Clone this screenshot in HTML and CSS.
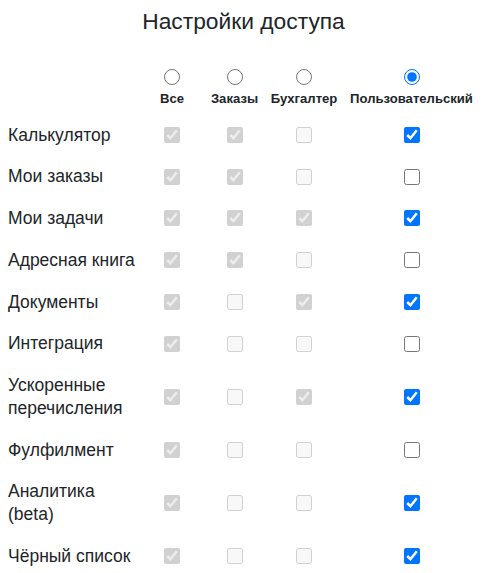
FILE: index.html
```html
<!DOCTYPE html>
<html lang="ru">
<head>
<meta charset="utf-8">
<title>Настройки доступа</title>
<link rel="stylesheet" href="styles.css">
</head>
<body>
<div class="page">
  <h1 class="title">Настройки доступа</h1>
  <table class="access">
    <colgroup>
      <col class="c-label">
      <col class="c-all">
      <col class="c-orders">
      <col class="c-acc">
      <col class="c-custom">
    </colgroup>
    <thead>
      <tr>
        <th></th>
        <th><label class="preset"><input type="radio" name="preset"><span>Все</span></label></th>
        <th><label class="preset"><input type="radio" name="preset"><span>Заказы</span></label></th>
        <th><label class="preset"><input type="radio" name="preset"><span>Бухгалтер</span></label></th>
        <th><label class="preset"><input type="radio" name="preset" checked><span>Пользовательский</span></label></th>
      </tr>
    </thead>
    <tbody>
      <tr><td class="name">Калькулятор</td><td><input type="checkbox" disabled checked></td><td><input type="checkbox" disabled checked></td><td><input type="checkbox" disabled></td><td><input type="checkbox" checked></td></tr>
      <tr><td class="name">Мои заказы</td><td><input type="checkbox" disabled checked></td><td><input type="checkbox" disabled checked></td><td><input type="checkbox" disabled></td><td><input type="checkbox"></td></tr>
      <tr><td class="name">Мои задачи</td><td><input type="checkbox" disabled checked></td><td><input type="checkbox" disabled checked></td><td><input type="checkbox" disabled checked></td><td><input type="checkbox" checked></td></tr>
      <tr><td class="name">Адресная книга</td><td><input type="checkbox" disabled checked></td><td><input type="checkbox" disabled checked></td><td><input type="checkbox" disabled></td><td><input type="checkbox"></td></tr>
      <tr><td class="name">Документы</td><td><input type="checkbox" disabled checked></td><td><input type="checkbox" disabled></td><td><input type="checkbox" disabled checked></td><td><input type="checkbox" checked></td></tr>
      <tr><td class="name">Интеграция</td><td><input type="checkbox" disabled checked></td><td><input type="checkbox" disabled></td><td><input type="checkbox" disabled></td><td><input type="checkbox"></td></tr>
      <tr><td class="name">Ускоренные перечисления</td><td><input type="checkbox" disabled checked></td><td><input type="checkbox" disabled></td><td><input type="checkbox" disabled checked></td><td><input type="checkbox" checked></td></tr>
      <tr><td class="name">Фулфилмент</td><td><input type="checkbox" disabled checked></td><td><input type="checkbox" disabled></td><td><input type="checkbox" disabled></td><td><input type="checkbox"></td></tr>
      <tr><td class="name">Аналитика (beta)</td><td><input type="checkbox" disabled checked></td><td><input type="checkbox" disabled></td><td><input type="checkbox" disabled></td><td><input type="checkbox" checked></td></tr>
      <tr><td class="name">Чёрный список</td><td><input type="checkbox" disabled checked></td><td><input type="checkbox" disabled></td><td><input type="checkbox" disabled></td><td><input type="checkbox" checked></td></tr>
    </tbody>
  </table>
</div>
</body>
</html>
```

FILE: styles.css
```css
html, body {
  margin: 0;
  padding: 0;
  background: #ffffff;
}

body {
  font-family: "Liberation Sans", Arial, sans-serif;
  color: #212529;
}

.page {
  padding: 0 5px 0 8px;
}

.title {
  margin: 7px 0 0;
  font-size: 22.8px;
  line-height: 28px;
  font-weight: normal;
  text-align: center;
  color: #212529;
}

.access {
  border-collapse: collapse;
  table-layout: fixed;
  width: 471px;
  margin-top: 26px;
}

.c-label { width: 131px; }
.c-all { width: 66px; }
.c-orders { width: 59px; }
.c-acc { width: 80px; }
.c-custom { width: 135px; }

.access th {
  padding: 8px 0 7px;
  font-size: 13.1px;
  font-weight: bold;
  line-height: 16px;
  text-align: center;
  vertical-align: bottom;
  white-space: nowrap;
}

.preset {
  display: flex;
  flex-direction: column;
  align-items: center;
  gap: 6px;
}

.preset input {
  width: 16px;
  height: 16px;
  margin: 0;
}

.access td {
  padding: 9.5px 0;
  text-align: center;
  vertical-align: middle;
}

.access td.name {
  text-align: left;
  font-size: 17.5px;
  line-height: 22.75px;
}

.access td input {
  display: block;
  width: 16px;
  height: 16px;
  margin: 0 auto;
}
```
